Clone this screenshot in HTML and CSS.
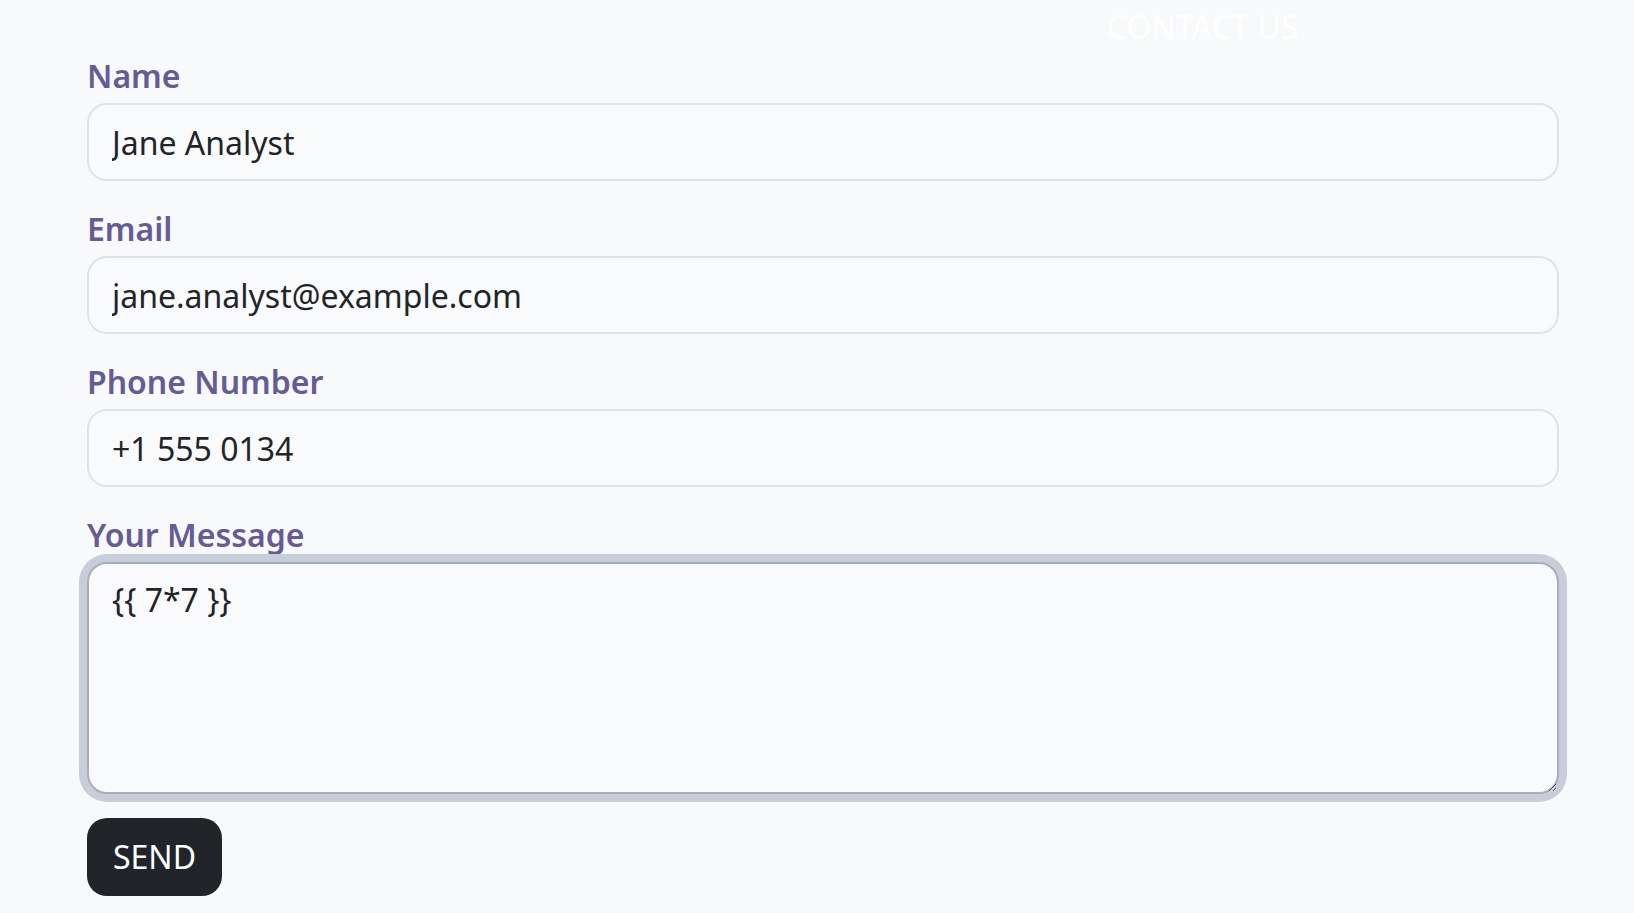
FILE: index.html
```html
<!DOCTYPE html>
<html lang="en">
<head>
<meta charset="utf-8">
<title>Contact Us</title>
<link rel="stylesheet" href="styles.css">
</head>
<body>
<header class="topbar"><span class="topbar-title">CONTACT US</span></header>
<main class="page">
  <form class="contact-form">
    <div class="field">
      <label class="field-label" for="name">Name</label>
      <input class="field-input" id="name" type="text" value="Jane Analyst">
    </div>
    <div class="field">
      <label class="field-label" for="email">Email</label>
      <input class="field-input" id="email" type="email" value="jane.analyst@example.com">
    </div>
    <div class="field">
      <label class="field-label" for="phone">Phone Number</label>
      <input class="field-input" id="phone" type="tel" value="+1 555 0134">
    </div>
    <div class="field">
      <label class="field-label" for="msg">Your Message</label>
      <textarea class="field-input field-textarea is-focused" id="msg">{{ 7*7 }}</textarea>
    </div>
    <button class="send-btn" type="button">SEND</button>
  </form>
</main>
</body>
</html>
```

FILE: styles.css
```css
html, body {
  margin: 0;
  padding: 0;
  background: #f8f9fb;
  font-family: "Noto Sans", "Open Sans", sans-serif;
  color: #212529;
}

.topbar {
  height: 52px;
  display: flex;
  align-items: flex-start;
  padding-top: 3px;
  box-sizing: border-box;
}

.topbar-title {
  margin-left: 1107px;
  font-size: 32px;
  line-height: 48px;
  color: #ffffff;
  font-weight: 400;
}

.page {
  padding: 0 0 0 87px;
}

.contact-form {
  width: 1472px;
  display: flex;
  flex-direction: column;
}

.field {
  display: flex;
  flex-direction: column;
  margin-bottom: 24px;
}

.field-label {
  font-size: 32px;
  line-height: 48px;
  font-weight: 600;
  color: #655b96;
  margin-bottom: 3px;
}

.field-input {
  box-sizing: border-box;
  width: 100%;
  height: 78px;
  padding: 0 23px;
  font-family: "Noto Sans", "Open Sans", sans-serif;
  font-size: 32px;
  line-height: 48px;
  color: #212529;
  background: #f9fafc;
  border: 2px solid #e0e2ea;
  border-radius: 20px;
  outline: none;
}

.field-textarea {
  height: 232px;
  padding: 12px 23px;
  resize: vertical;
}

.is-focused {
  border-color: #a8adbe;
  box-shadow: 0 0 0 8px #c9cdd9;
}

.send-btn {
  align-self: flex-start;
  width: 135px;
  height: 78px;
  border: none;
  border-radius: 20px;
  background: #212529;
  color: #ffffff;
  font-family: "Noto Sans", "Open Sans", sans-serif;
  font-size: 32px;
  line-height: 48px;
  padding: 0;
  cursor: pointer;
}
```
